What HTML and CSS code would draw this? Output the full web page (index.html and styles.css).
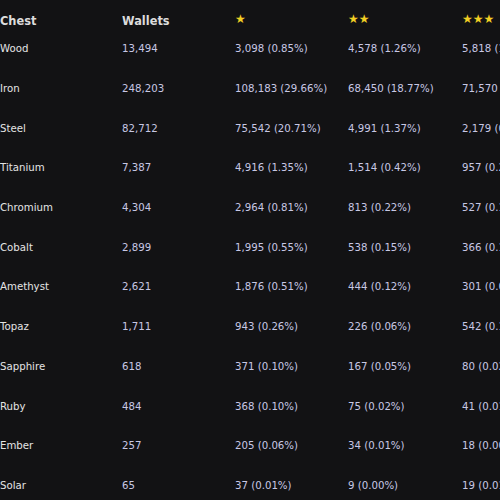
FILE: index.html
```html
<!DOCTYPE html>
<html>
<head>
<meta charset="utf-8">
<link rel="stylesheet" href="styles.css">
</head>
<body>
<div class="table">
  <div class="row head">
    <div class="cell">Chest</div>
    <div class="cell">Wallets</div>
    <div class="cell star">★</div>
    <div class="cell star">★★</div>
    <div class="cell star">★★★</div>
  </div>
  <div class="row"><div class="cell name">Wood</div><div class="cell num">13,494</div><div class="cell num">3,098 (0.85%)</div><div class="cell num">4,578 (1.26%)</div><div class="cell num">5,818 (1.60%)</div></div>
  <div class="row"><div class="cell name">Iron</div><div class="cell num">248,203</div><div class="cell num">108,183 (29.66%)</div><div class="cell num">68,450 (18.77%)</div><div class="cell num">71,570 (19.62%)</div></div>
  <div class="row"><div class="cell name">Steel</div><div class="cell num">82,712</div><div class="cell num">75,542 (20.71%)</div><div class="cell num">4,991 (1.37%)</div><div class="cell num">2,179 (0.60%)</div></div>
  <div class="row"><div class="cell name">Titanium</div><div class="cell num">7,387</div><div class="cell num">4,916 (1.35%)</div><div class="cell num">1,514 (0.42%)</div><div class="cell num">957 (0.26%)</div></div>
  <div class="row"><div class="cell name">Chromium</div><div class="cell num">4,304</div><div class="cell num">2,964 (0.81%)</div><div class="cell num">813 (0.22%)</div><div class="cell num">527 (0.14%)</div></div>
  <div class="row"><div class="cell name">Cobalt</div><div class="cell num">2,899</div><div class="cell num">1,995 (0.55%)</div><div class="cell num">538 (0.15%)</div><div class="cell num">366 (0.10%)</div></div>
  <div class="row"><div class="cell name">Amethyst</div><div class="cell num">2,621</div><div class="cell num">1,876 (0.51%)</div><div class="cell num">444 (0.12%)</div><div class="cell num">301 (0.08%)</div></div>
  <div class="row"><div class="cell name">Topaz</div><div class="cell num">1,711</div><div class="cell num">943 (0.26%)</div><div class="cell num">226 (0.06%)</div><div class="cell num">542 (0.15%)</div></div>
  <div class="row"><div class="cell name">Sapphire</div><div class="cell num">618</div><div class="cell num">371 (0.10%)</div><div class="cell num">167 (0.05%)</div><div class="cell num">80 (0.02%)</div></div>
  <div class="row"><div class="cell name">Ruby</div><div class="cell num">484</div><div class="cell num">368 (0.10%)</div><div class="cell num">75 (0.02%)</div><div class="cell num">41 (0.01%)</div></div>
  <div class="row"><div class="cell name">Ember</div><div class="cell num">257</div><div class="cell num">205 (0.06%)</div><div class="cell num">34 (0.01%)</div><div class="cell num">18 (0.00%)</div></div>
  <div class="row"><div class="cell name">Solar</div><div class="cell num">65</div><div class="cell num">37 (0.01%)</div><div class="cell num">9 (0.00%)</div><div class="cell num">19 (0.01%)</div></div>
</div>
</body>
</html>
```
FILE: styles.css
```css
html, body {
  margin: 0;
  padding: 0;
  background: #121214;
  overflow: hidden;
  width: 500px;
  height: 500px;
}
.table {
  font-family: "DejaVu Sans", sans-serif;
  font-size: 10.2px;
  width: 600px;
  padding-top: 1px;
}
.row {
  display: grid;
  grid-template-columns: 122px 113px 113px 114px 138px;
  height: 39.7px;
  align-items: center;
}
.row.head {
  height: 28px;
  align-items: start;
}
.head .cell {
  padding-top: 12px;
  line-height: 16px;
  font-weight: bold;
  font-size: 11.4px;
  color: #dcdcdc;
}
.head .star {
  color: #f2d024;
  font-size: 12px;
  padding-top: 10px;
}
.cell {
  white-space: nowrap;
}
.name {
  color: #e4e4e4;
}
.num {
  color: #c8c8e4;
}
```
